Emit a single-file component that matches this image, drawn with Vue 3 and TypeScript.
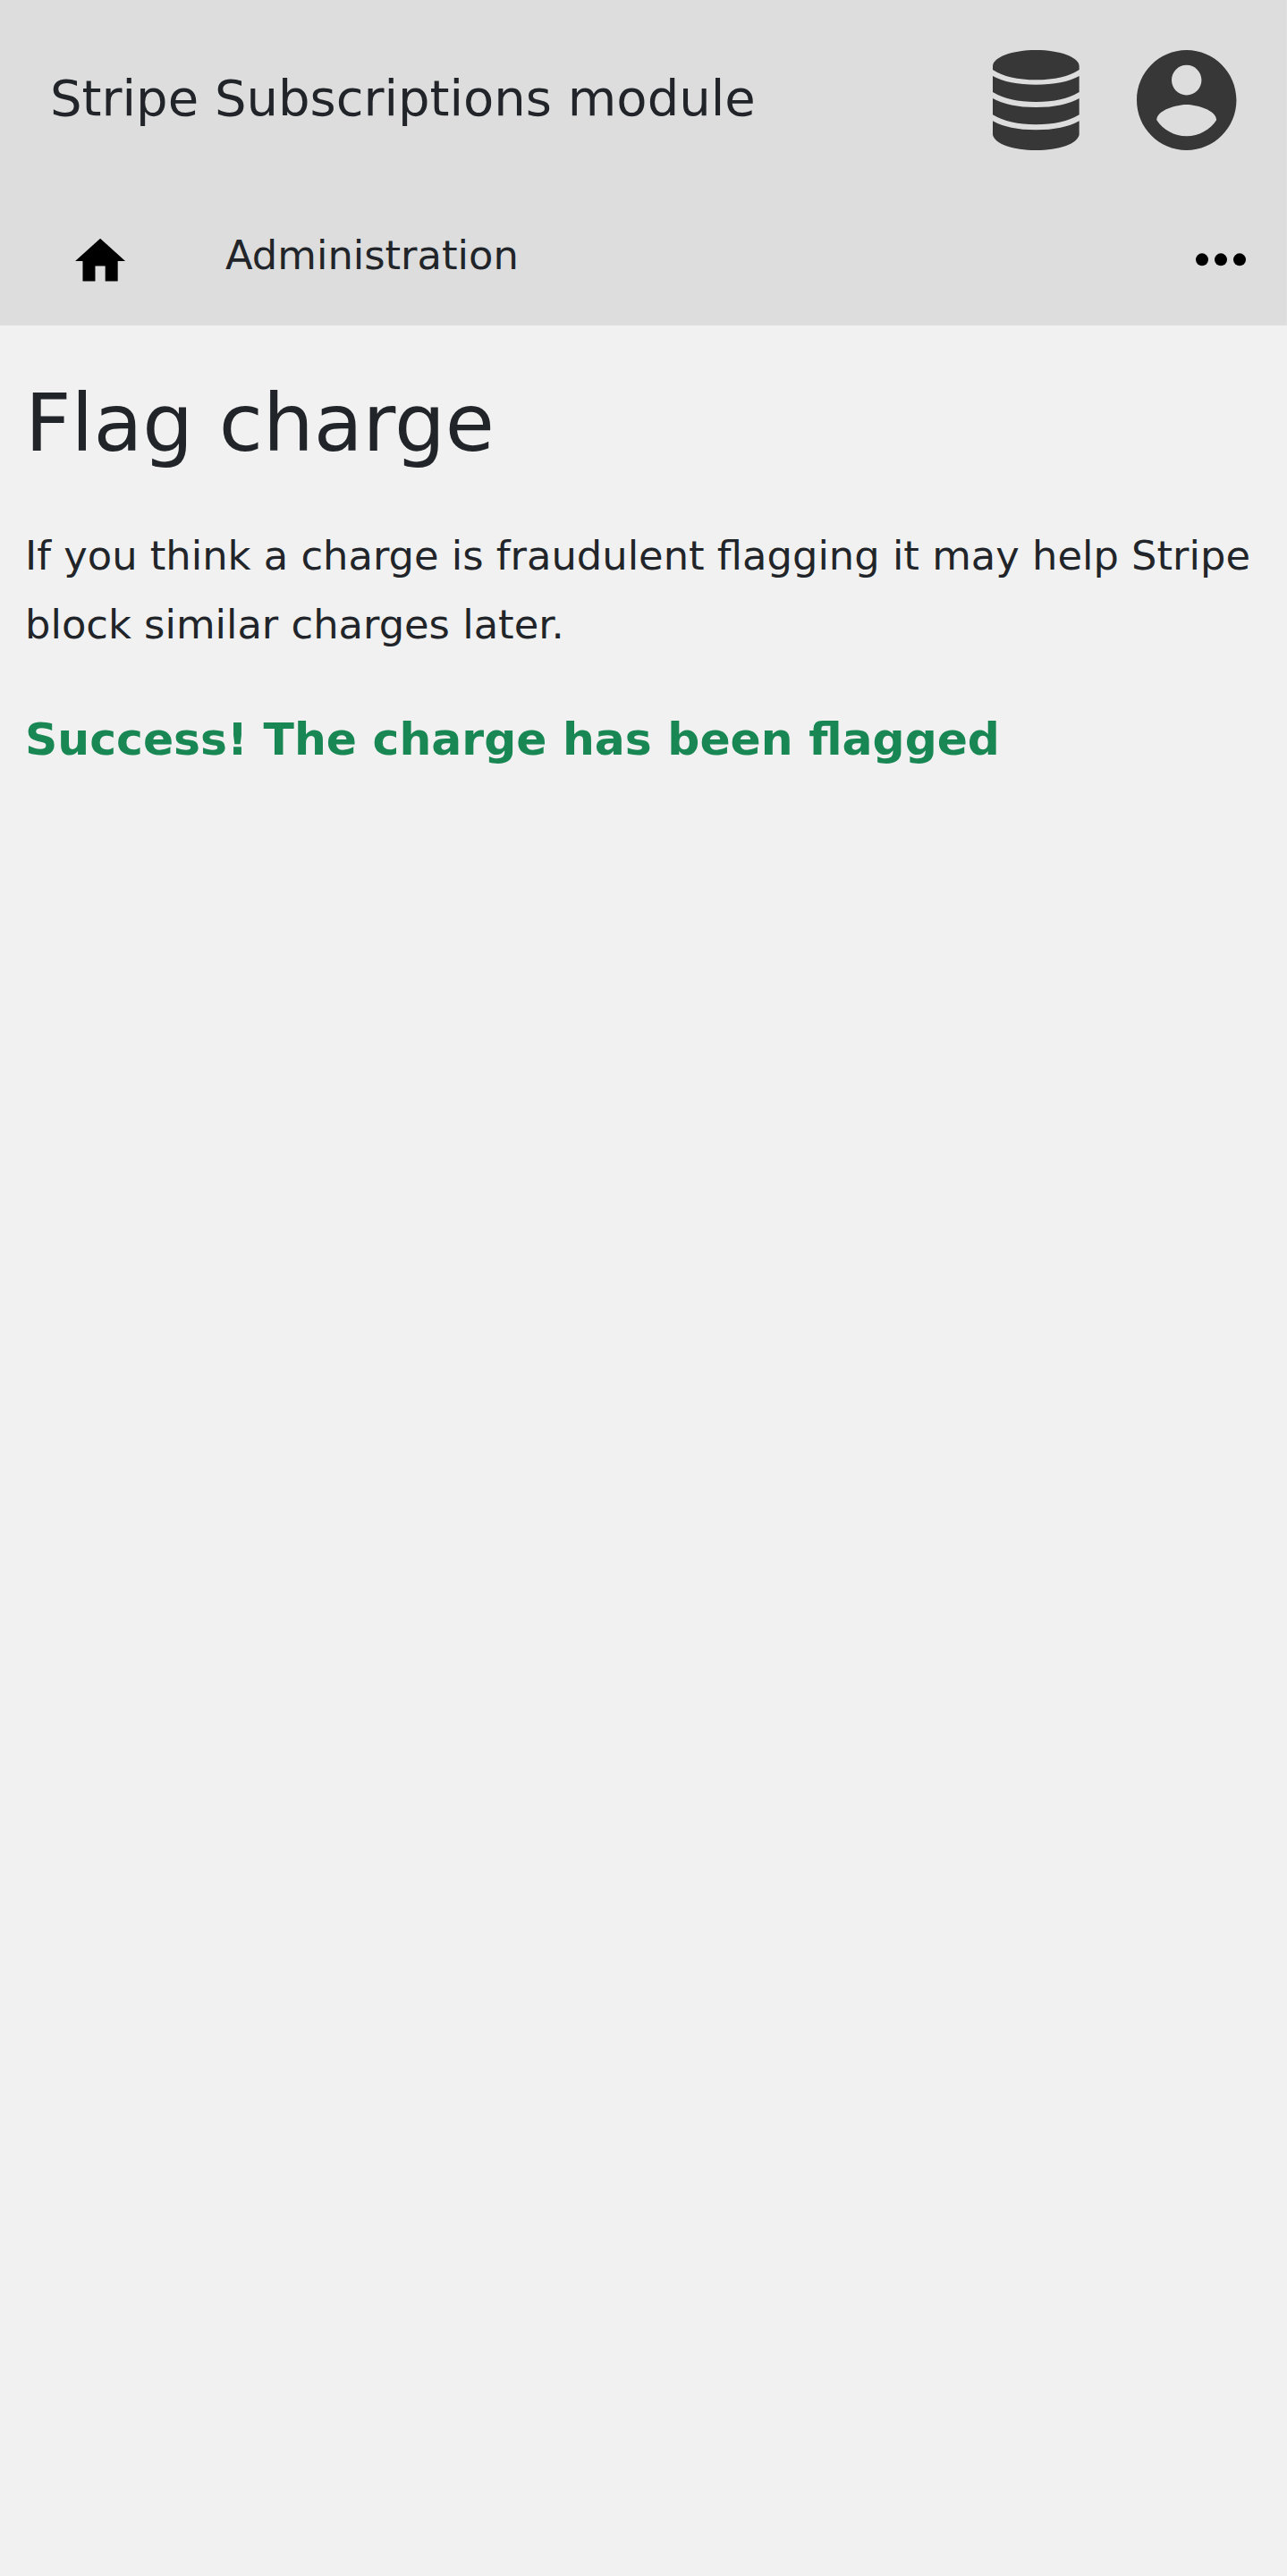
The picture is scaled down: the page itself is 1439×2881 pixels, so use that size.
<script setup lang="ts">
const title: string = 'Stripe Subscriptions module'
</script>

<template>
  <div class="page">
    <header class="topbar">
      <span class="brand">{{ title }}</span>
      <div class="actions">
        <svg class="database" viewBox="90 77 292 336" preserveAspectRatio="none" aria-hidden="true">
          <path d="M90 131C90 101 155 77 235.500 77S381 101 381 131V143Q329 177 235.500 177T90 143Z" />
          <path d="M90 164Q143 193 235.500 193T381 164V218Q326 251 235.500 251T90 218Z" />
          <path d="M90 239Q143 269 235.500 269T381 239V294Q326 327 235.500 327T90 294Z" />
          <path d="M90 315Q143 345 235.500 345T381 315V361C375 391 313 413 235.500 413S96 391 90 361Z" />
        </svg>
        <svg class="account" viewBox="2 2 20.100 20" preserveAspectRatio="none" aria-hidden="true">
          <path d="M12 2C6.480 2 2 6.480 2 12s4.480 10 10 10 10-4.480 10-10S17.520 2 12 2zm0 3c1.660 0 3 1.340 3 3s-1.340 3-3 3-3-1.340-3-3 1.340-3 3-3zm0 14.200c-2.500 0-4.710-1.280-6-3.220.030-1.990 4-3.080 6-3.080 1.990 0 5.970 1.090 6 3.080-1.290 1.940-3.500 3.220-6 3.220z" />
        </svg>
      </div>
    </header>
    <nav class="nav">
      <svg class="home" viewBox="-0.170 -0.140 24.286 24.286" aria-hidden="true">
        <path d="M10 20v-6h4v6h5v-8h3L12 3 2 12h3v8z" />
      </svg>
      <span class="link">Administration</span>
      <svg class="more" viewBox="0 -0.100 24 24" aria-hidden="true">
        <circle cx="6" cy="12" r="2" />
        <circle cx="12" cy="12" r="2" />
        <circle cx="18" cy="12" r="2" />
      </svg>
    </nav>
    <main class="content">
      <h1>Flag charge</h1>
      <p>If you think a charge is fraudulent flagging it may help Stripe block similar charges later.</p>
      <p class="success">Success! The charge has been flagged</p>
    </main>
  </div>
</template>

<style>
body {
  margin: 0;
  background: #f1f1f1;
}
</style>

<style scoped>
.page {
  min-height: 2881px;
  background: #f1f1f1;
  color: #212529;
  font-family: "DejaVu Sans", sans-serif;
  font-size: 44.8px;
  line-height: 77px;
}
.topbar {
  display: flex;
  align-items: center;
  justify-content: space-between;
  box-sizing: border-box;
  height: 224px;
  padding: 0 55px 0 56px;
  border-right: 1px solid #e1e1e1;
  background: #ddd;
}
.brand {
  font-size: 56px;
  line-height: 84px;
  padding-bottom: 4px;
}
.actions {
  display: flex;
  align-items: center;
  gap: 64px;
  fill: #373737;
}
.database {
  width: 97px;
  height: 112px;
}
.account {
  width: 112px;
  height: 112px;
}
.nav {
  display: flex;
  align-items: flex-start;
  box-sizing: border-box;
  height: 140px;
  padding: 23px 31px 0 78px;
  border-right: 1px solid #e1e1e1;
  background: #ddd;
}
.home {
  width: 68px;
  height: 68px;
  margin-top: 11px;
}
.link {
  margin-left: 106px;
}
.more {
  width: 84px;
  height: 84px;
  margin: 1px 0 0 auto;
}
.content {
  padding: 55px 28px 0;
}
h1 {
  margin: 0 0 56px;
  font-size: 89.600px;
  font-weight: 400;
  line-height: 108px;
}
p {
  margin: 0;
}
.success {
  margin-top: 51px;
  color: #198754;
  font-size: 50.400px;
  font-weight: 700;
}
</style>
